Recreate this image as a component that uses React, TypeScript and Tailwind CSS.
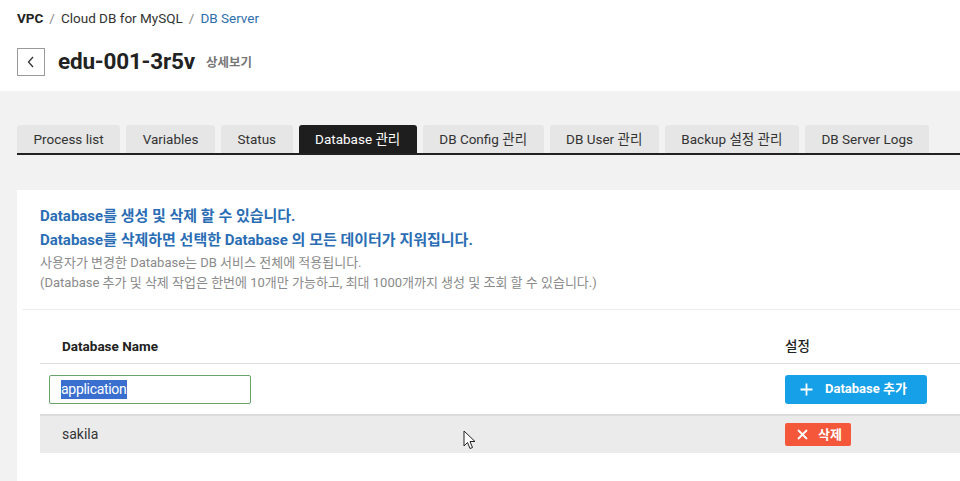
import React from "react";

const font = { fontFamily: "Roboto, 'Noto Sans CJK KR', sans-serif" };

const tabs = [
  "Process list",
  "Variables",
  "Status",
  "Database 관리",
  "DB Config 관리",
  "DB User 관리",
  "Backup 설정 관리",
  "DB Server Logs",
];

export default function App() {
  return (
    <div className="w-[960px] h-[481px] overflow-hidden bg-[#f2f2f2] relative" style={font}>
      {/* header */}
      <div className="bg-white h-[91px] pl-[17px] pt-[9px]">
        <div className="flex items-center gap-[6px] text-[13.5px] leading-[18px] text-[#333]">
          <span className="font-bold text-[#222]">VPC</span>
          <span className="text-[#888]">/</span>
          <span>Cloud DB for MySQL</span>
          <span className="text-[#888]">/</span>
          <span className="text-[#2f6fad]">DB Server</span>
        </div>
        <div className="flex items-center mt-[18px]">
          <div className="w-[28px] h-[28px] border border-[#9a9a9a] flex items-center justify-center bg-white">
            <svg width="10" height="12" viewBox="0 0 10 12" fill="none">
              <path d="M7 1 L2.5 6 L7 11" stroke="#333" strokeWidth="1.3" />
            </svg>
          </div>
          <span className="ml-[13px] text-[22.5px] font-bold text-[#222] tracking-[-0.2px]">edu-001-3r5v</span>
          <span className="ml-[11px] mt-[2px] text-[12.5px] font-bold text-[#777]">상세보기</span>
        </div>
      </div>

      {/* tabs */}
      <div className="pl-[17px] pt-[34px]">
        <div className="flex items-end gap-[6px] border-b-2 border-[#222]">
          {tabs.map((t) => {
            const active = t === "Database 관리";
            return (
              <div
                key={t}
                className={
                  active
                    ? "h-[28px] px-[16.5px] flex items-center text-[13.5px] bg-[#1e1e1e] text-white rounded-t-[3px]"
                    : "h-[28px] px-[16.5px] flex items-center text-[13.5px] bg-[#e6e6e6] text-[#333] rounded-t-[3px]"
                }
              >
                {t}
              </div>
            );
          })}
        </div>
      </div>

      {/* card */}
      <div className="ml-[17px] mt-[35px] bg-white h-[300px]">
        <div className="pl-[23px] pt-[14px] pb-[16px]">
          <div className="text-[15px] font-bold text-[#2a6db4] leading-[24px]">Database를 생성 및 삭제 할 수 있습니다.</div>
          <div className="text-[15px] font-bold text-[#2a6db4] leading-[24px]">
            Database를 삭제하면 선택한 Database 의 모든 데이터가 지워집니다.
          </div>
          <div className="mt-[1px] text-[13px] text-[#8a8a8a] leading-[20px]">사용자가 변경한 Database는 DB 서비스 전체에 적용됩니다.</div>
          <div className="text-[13px] text-[#8a8a8a] leading-[20px]">
            (Database 추가 및 삭제 작업은 한번에 10개만 가능하고, 최대 1000개까지 생성 및 조회 할 수 있습니다.)
          </div>
        </div>
        <div className="ml-[5px] border-t border-[#ececec]" />

        {/* table */}
        <div className="ml-[23px] mt-[19px]">
          <div className="h-[35px] flex items-center border-b border-[#dedede] text-[13.5px] font-bold text-[#222]">
            <div className="pl-[22px] w-[745px]">Database Name</div>
            <div className="font-medium">설정</div>
          </div>
          <div className="h-[52px] flex items-center border-b-2 border-[#dcdcdc]">
            <div className="w-[745px] pl-[9px]">
              <div className="w-[202px] h-[29px] border border-[#6aa36a] rounded-[2px] flex items-center pl-[11px]">
                <span className="bg-[#3a6fd0] text-white text-[14px] leading-[19px] tracking-[-0.3px]">application</span>
              </div>
            </div>
            <div className="w-[142px] h-[29px] rounded-[3px] bg-[#16a0e8] flex items-center pl-[15px] text-white text-[13px] font-bold">
              <svg width="13" height="13" viewBox="0 0 13 13" className="mr-[12px]">
                <path d="M6.5 0.5 V12.5 M0.5 6.5 H12.5" stroke="white" strokeWidth="1.8" />
              </svg>
              Database 추가
            </div>
          </div>
          <div className="h-[37px] flex items-center bg-[#ebebeb]">
            <div className="w-[745px] pl-[22px] text-[14px] text-[#333]">sakila</div>
            <div className="w-[66px] h-[23px] rounded-[2px] bg-[#f5573a] flex items-center pl-[12px] text-white text-[13px] font-bold">
              <svg width="11" height="11" viewBox="0 0 11 11" className="mr-[10px]">
                <path d="M1 1 L10 10 M10 1 L1 10" stroke="white" strokeWidth="1.8" />
              </svg>
              삭제
            </div>
          </div>
        </div>
      </div>

      {/* mouse cursor */}
      <svg className="absolute left-[463px] top-[430px]" width="14" height="20" viewBox="0 0 14 20">
        <path d="M1 1 L1 16 L4.5 12.5 L7 18.5 L9.5 17.5 L7 11.5 L12 11.5 Z" fill="white" stroke="#222" strokeWidth="1" strokeLinejoin="round" />
      </svg>
    </div>
  );
}
